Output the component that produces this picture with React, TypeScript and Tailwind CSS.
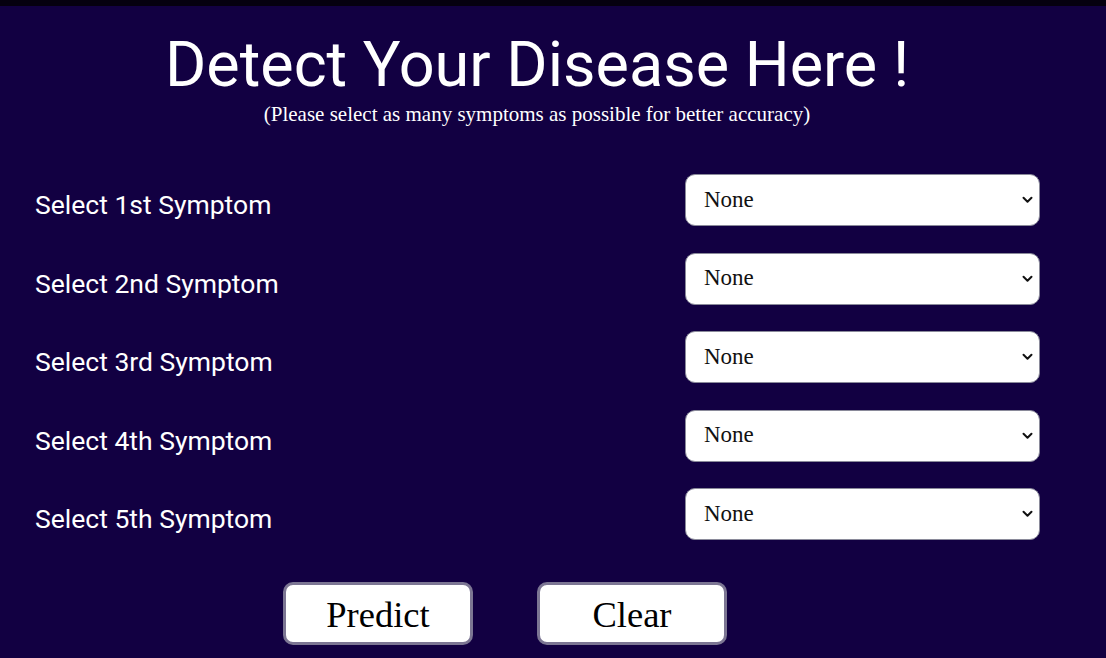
import React from "react";

const labels = ["1st", "2nd", "3rd", "4th", "5th"];

function Chevron() {
  return (
    <svg width="11" height="8" viewBox="0 0 11 8" className="absolute right-[7px] top-1/2 -translate-y-1/2 pointer-events-none">
      <path d="M1.5 1.8 L5.5 5.8 L9.5 1.8" stroke="#111" strokeWidth="2" fill="none" strokeLinecap="round" strokeLinejoin="round" />
    </svg>
  );
}

export default function App() {
  return (
    <div className="w-[1106px] h-[658px] bg-[#120042] overflow-hidden flex flex-col">
      <div className="h-[6px] bg-[#05000f] shrink-0" />
      <div className="w-[1074px] flex flex-col items-center text-white">
        <h1 className="mt-[27px] text-[63px] leading-[63px] text-white" style={{ fontFamily: "Roboto, sans-serif" }}>
          Detect Your Disease Here !
        </h1>
        <p className="mt-[6px] text-[21px] leading-[24px]" style={{ fontFamily: "'Liberation Serif', serif" }}>
          (Please select as many symptoms as possible for better accuracy)
        </p>
      </div>
      <div className="flex flex-col mt-[48px] gap-[26.5px] pl-[35px] w-[1040px]">
        {labels.map((l) => (
          <div key={l} className="flex items-center justify-between h-[52px]">
            <span className="text-[26.5px] text-white mt-[10px]" style={{ fontFamily: "Roboto, sans-serif" }}>
              Select {l} Symptom
            </span>
            <div className="relative w-[355px] h-[52px]">
              <select
                className="appearance-none w-full h-full bg-white rounded-[10px] border border-[#8a8a9a] pl-[18px] text-[23px] text-[#111] outline-none"
                style={{ fontFamily: "'Liberation Serif', serif" }}
                defaultValue="None"
              >
                <option>None</option>
              </select>
              <Chevron />
            </div>
          </div>
        ))}
      </div>
      <div className="flex w-[1010px] justify-center gap-[64px] mt-[42px]">
        {["Predict", "Clear"].map((b) => (
          <button
            key={b}
            className="w-[190px] h-[63px] bg-white rounded-[10px] border-[3px] border-[#7c7693] text-[36.5px] text-black pt-[3px]"
            style={{ fontFamily: "'Liberation Serif', serif" }}
          >
            {b}
          </button>
        ))}
      </div>
    </div>
  );
}
